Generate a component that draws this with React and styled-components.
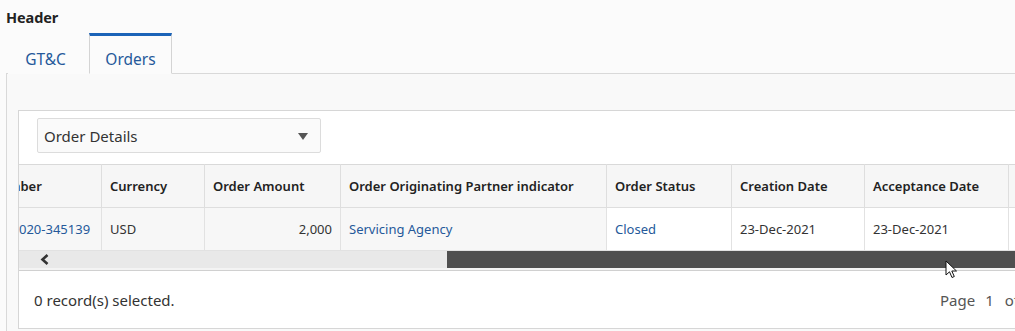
import React, { useLayoutEffect, useRef } from 'react';
import styled, { createGlobalStyle } from 'styled-components';

const GlobalStyle = createGlobalStyle`
  html, body {
    margin: 0;
    padding: 0;
    background: #fbfbfb;
    overflow: hidden;
  }
  body {
    font-family: "Noto Sans", "Open Sans", Arial, sans-serif;
    color: #333;
  }
`;

const columns = [
  { key: 'number', title: 'Order Number', width: 161, link: true },
  { key: 'currency', title: 'Currency', width: 103 },
  { key: 'amount', title: 'Order Amount', width: 136, align: 'right' },
  { key: 'partner', title: 'Order Originating Partner indicator', width: 266, link: true },
  { key: 'status', title: 'Order Status', width: 125, link: true },
  { key: 'created', title: 'Creation Date', width: 133 },
  { key: 'accepted', title: 'Acceptance Date', width: 144 },
  { key: 'expiry', title: 'Expiry Date', width: 140 },
];

const tableWidth = columns.reduce((s, c) => s + c.width, 0);

const rows = [
  {
    number: 'ORD-NBR-2020-345139',
    currency: 'USD',
    amount: '2,000',
    partner: 'Servicing Agency',
    status: 'Closed',
    created: '23-Dec-2021',
    accepted: '23-Dec-2021',
    expiry: '23-Dec-2022',
  },
];

const Page = styled.div`
  padding: 0 0 0 6px;
  width: 1009px;
  overflow: hidden;
`;

const Title = styled.h2`
  margin: 0;
  padding: 7px 0 0;
  height: 26px;
  font-size: 14.5px;
  font-weight: 700;
  color: #222;
  letter-spacing: -0.1px;
`;

const TabBar = styled.div`
  display: flex;
  padding-left: 2px;
  height: 41px;
  margin-bottom: -1px;
  position: relative;
`;

const Tab = styled.div`
  width: ${p => (p.$active ? '83px' : '81px')};
  box-sizing: border-box;
  display: flex;
  align-items: center;
  justify-content: center;
  padding-top: 8px;
  padding-right: ${p => (p.$active ? 0 : 6)}px;
  font-size: 15.5px;
  color: #25599a;
  border: 1px solid ${p => (p.$active ? '#d4d4d4' : 'transparent')};
  border-top: 3px solid ${p => (p.$active ? '#1b63b8' : 'transparent')};
  border-bottom: 1px solid ${p => (p.$active ? '#fbfbfb' : 'transparent')};
  background: #fbfbfb;
`;

const Panel = styled.div`
  border: 1px solid #d9d9d9;
  border-right: none;
  background: #f9f9f9;
  padding: 36px 0 0 11px;
  height: 300px;
`;

const Card = styled.div`
  border: 1px solid #d6d6d6;
  background: #fff;
  width: 1063px;
  box-sizing: border-box;
`;

const Toolbar = styled.div`
  height: 53px;
  padding: 7px 0 0 18px;
  box-sizing: border-box;
`;

const Select = styled.div`
  width: 284px;
  height: 35px;
  box-sizing: border-box;
  border: 1px solid #dcdcdc;
  border-radius: 2px;
  background: #fafafa;
  display: flex;
  align-items: center;
  justify-content: space-between;
  padding: 0 12px 0 6px;
  font-size: 15px;
  color: #333;
`;

const Caret = styled.span`
  width: 0;
  height: 0;
  border-left: 5px solid transparent;
  border-right: 5px solid transparent;
  border-top: 7px solid #555;
  margin-top: 2px;
`;

const Viewport = styled.div`
  overflow: hidden;
  width: 100%;
`;

const Table = styled.table`
  border-collapse: collapse;
  table-layout: fixed;
  width: ${tableWidth}px;
  font-size: 13px;
`;

const Th = styled.th`
  height: 43px;
  box-sizing: border-box;
  padding: 0 8px;
  text-align: left;
  font-weight: 600;
  color: #222;
  background: #f6f6f6;
  border: 1px solid #dedede;
  border-top-color: #d9d9d9;
  white-space: nowrap;
  overflow: hidden;
`;

const Td = styled.td`
  height: 43px;
  box-sizing: border-box;
  padding: 0 8px;
  text-align: ${p => p.$align || 'left'};
  color: ${p => (p.$link ? '#25599a' : '#333')};
  background: ${p => (p.$hover ? '#f7f7f7' : '#fff')};
  border: 1px solid #e2e2e2;
  border-top: 1px solid #dedede;
  white-space: nowrap;
  overflow: hidden;
`;

const ScrollBar = styled.div`
  position: relative;
  height: 17px;
  background: #e9e9e9;
  border-bottom: 2px solid #f4f4f4;
`;

const ScrollArrow = styled.span`
  position: absolute;
  left: 21px;
  top: 3px;
  display: flex;
`;

const Thumb = styled.div`
  position: absolute;
  top: 0;
  height: 17px;
  left: ${p => p.$left}px;
  width: ${p => p.$width}px;
  background: #4f4f4f;
`;

const Cursor = styled.svg`
  position: absolute;
  left: 926px;
  top: 9px;
`;

const Footer = styled.div`
  height: 57px;
  border-top: 1px solid #d0d0d0;
  display: flex;
  align-items: center;
  padding: 0 0 0 15px;
  font-size: 15px;
  color: #333;
`;

const Pager = styled.div`
  margin-left: auto;
  display: flex;
  align-items: center;
  width: 140px;
  color: #555;
`;

const PagerPart = styled.span`
  margin-right: ${p => p.$gap || 0}px;
`;

export default function App() {
  const viewRef = useRef(null);

  useLayoutEffect(() => {
    if (viewRef.current) viewRef.current.scrollLeft = 79;
  }, []);

  return (
    <>
      <GlobalStyle />
      <Page>
        <Title>Header</Title>
        <TabBar>
          <Tab>GT&amp;C</Tab>
          <Tab $active>Orders</Tab>
        </TabBar>
        <Panel>
          <Card>
            <Toolbar>
              <Select>
                Order Details
                <Caret />
              </Select>
            </Toolbar>
            <Viewport ref={viewRef}>
              <Table>
                <colgroup>
                  {columns.map(c => (
                    <col key={c.key} style={{ width: c.width }} />
                  ))}
                </colgroup>
                <thead>
                  <tr>
                    {columns.map(c => (
                      <Th key={c.key}>{c.title}</Th>
                    ))}
                  </tr>
                </thead>
                <tbody>
                  {rows.map((r, i) => (
                    <tr key={i}>
                      {columns.map((c, j) => (
                        <Td key={c.key} $align={c.align} $link={c.link} $hover={j < 4}>
                          {r[c.key]}
                        </Td>
                      ))}
                    </tr>
                  ))}
                </tbody>
              </Table>
            </Viewport>
            <ScrollBar>
              <ScrollArrow>
                <svg width="10" height="11" viewBox="0 0 10 11">
                  <path d="M7.5 1 L2.5 5.5 L7.5 10" fill="none" stroke="#333" strokeWidth="2.6" />
                </svg>
              </ScrollArrow>
              <Thumb $left={428} $width={640} />
              <Cursor width="13" height="20" viewBox="0 0 13 20">
                <path d="M1 1 L1 15 L4.5 11.8 L7 17.5 L9.3 16.5 L6.8 11 L11.5 11 Z" fill="#fff" stroke="#111" strokeWidth="1" />
              </Cursor>
            </ScrollBar>
            <Footer>
              0 record(s) selected.
              <Pager>
                <PagerPart $gap={10}>Page</PagerPart>
                <PagerPart $gap={11}>1</PagerPart>
                <PagerPart>of 1</PagerPart>
              </Pager>
            </Footer>
          </Card>
        </Panel>
      </Page>
    </>
  );
}
